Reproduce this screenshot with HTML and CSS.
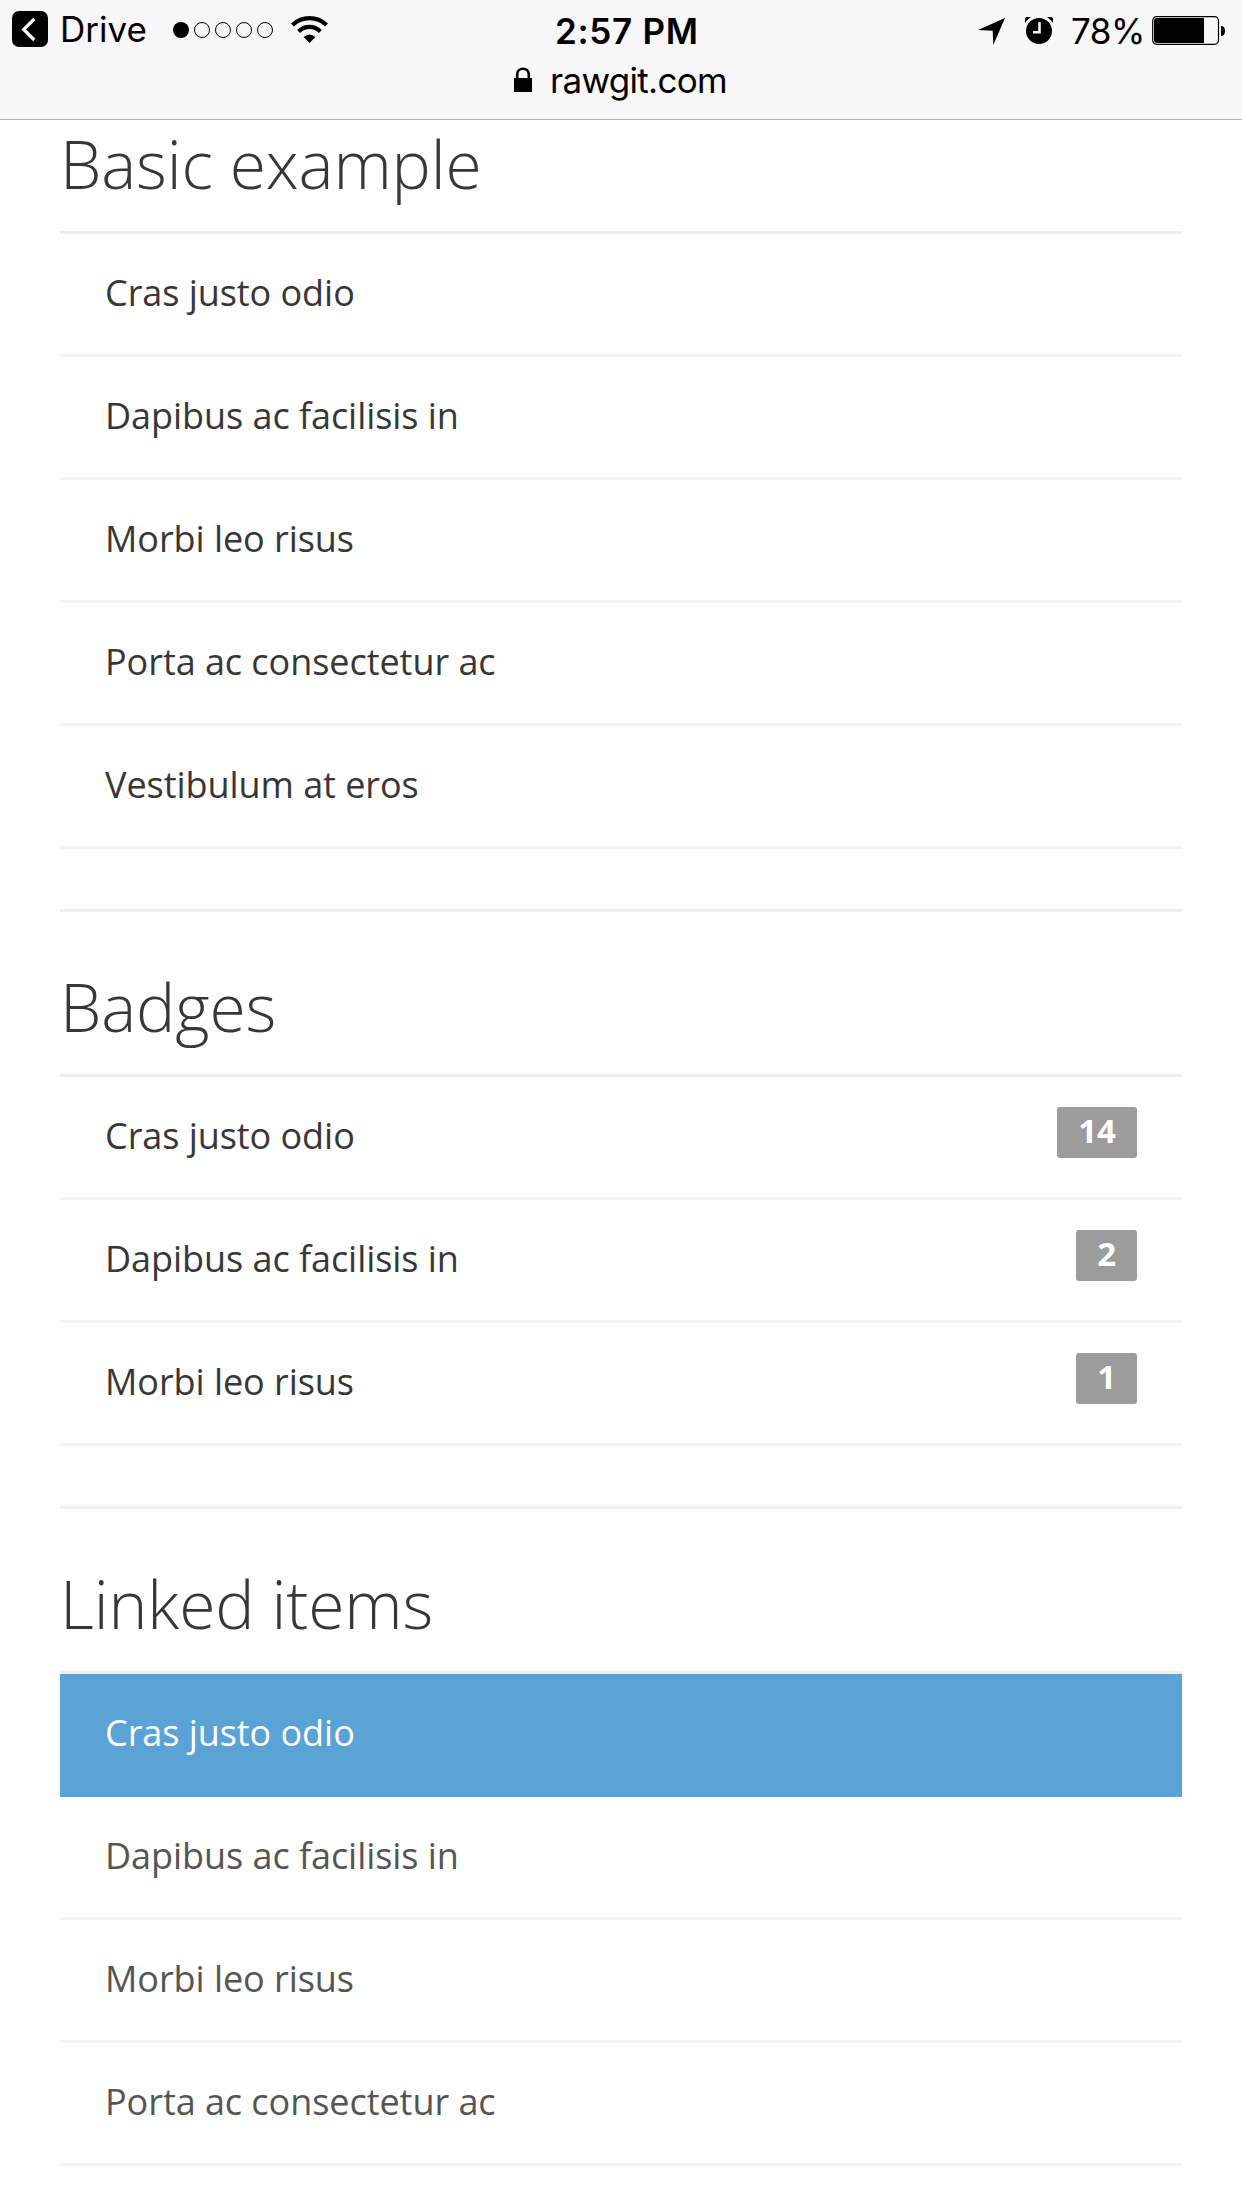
FILE: index.html
```html
<!DOCTYPE html>
<html lang="en">
<head>
<meta charset="utf-8">
<title>List groups</title>
<link rel="stylesheet" href="styles.css">
</head>
<body>
<header class="browser-bar">
  <div class="status">
    <div class="status-left">
      <svg class="back" width="36" height="36" viewBox="0 0 36 36"><rect width="36" height="36" rx="7"/><path d="M22.3 8L11.7 18.5L22.3 29" fill="none" stroke="#f8f7f6" stroke-width="3.2"/></svg>
      <span class="app">Drive</span>
      <svg class="signal" width="101" height="18" viewBox="0 0 101 18"><circle cx="9" cy="9" r="8"/><g fill="none" stroke="#000" stroke-width="1"><circle cx="30" cy="9" r="7.5"/><circle cx="51" cy="9" r="7.5"/><circle cx="72" cy="9" r="7.5"/><circle cx="93" cy="9" r="7.5"/></g></svg>
      <svg class="wifi" width="37" height="28" viewBox="0 0 37 28"><g fill="none" stroke="#000" stroke-width="4.2"><path d="M1.4 9Q8.8 2.1 18.5 2.1T35.6 9"/><path d="M7.6 15.5Q12.2 10.9 18.5 10.9T29.4 15.5"/></g><path d="M12.6 21.1Q18.5 15.9 24.4 21.1L18.5 27Z"/></svg>
    </div>
    <span class="time">2:57 PM</span>
    <div class="status-right">
      <svg class="location" width="28" height="28" viewBox="0 0 28 28"><path d="M0 12L27 0L15.3 27L14.7 12.8Z"/></svg>
      <svg class="alarm" width="28" height="28" viewBox="0 0 28 28"><circle cx="14" cy="14" r="13"/><path d="M0 6V2Q0 0 2 0H6Q3 2 0 6ZM28 6V2Q28 0 26 0H22Q25 2 28 6Z"/><path d="M14.5 5.2V15.3H8" fill="none" stroke="#f8f7f6" stroke-width="2.6"/></svg>
      <span class="percent">78%</span>
      <svg class="battery" width="74" height="30" viewBox="0 0 74 30"><rect x=".7" y=".7" width="65.8" height="27.6" rx="4" fill="none" stroke="#000" stroke-width="1.2"/><path d="M5 2H52V27H5Q2 27 2 24V5Q2 2 5 2ZM69 10Q73 10 73 15T69 20Z"/></svg>
    </div>
  </div>
  <div class="address">
    <svg class="lock" width="18" height="25" viewBox="0 0 18 25"><path d="M0 11H18V25H0Z"/><path d="M3.2 12V7.3C3.2-.2 14.8-.2 14.8 7.3V12" fill="none" stroke="#000" stroke-width="2.6"/></svg>
    <span class="host">rawgit.com</span>
  </div>
</header>
<main class="page">
  <h2 class="title title-first">Basic example</h2>
  <ul class="list">
    <li class="item">Cras justo odio</li>
    <li class="item">Dapibus ac facilisis in</li>
    <li class="item">Morbi leo risus</li>
    <li class="item">Porta ac consectetur ac</li>
    <li class="item">Vestibulum at eros</li>
  </ul>
  <hr class="divider">
  <h2 class="title">Badges</h2>
  <ul class="list">
    <li class="item">Cras justo odio <span class="badge">14</span></li>
    <li class="item">Dapibus ac facilisis in <span class="badge">2</span></li>
    <li class="item">Morbi leo risus <span class="badge">1</span></li>
  </ul>
  <hr class="divider">
  <h2 class="title">Linked items</h2>
  <nav class="list">
    <a class="item link active">Cras justo odio</a>
    <a class="item link">Dapibus ac facilisis in</a>
    <a class="item link">Morbi leo risus</a>
    <a class="item link">Porta ac consectetur ac</a>
  </nav>
</main>
</body>
</html>
```
FILE: styles.css
```css
* { box-sizing: border-box; }
body {
  margin: 0;
  height: 2208px;
  overflow: hidden;
  background: #fefefe;
  color: #373737;
  font-family: "Open Sans", sans-serif;
}
svg { display: block; flex: none; }

.browser-bar {
  height: 120px;
  background: #f7f7f7;
  border-bottom: 1px solid #b2b2b2;
  color: #000;
  font: 35px/44px Inter, "Liberation Sans", sans-serif;
  white-space: nowrap;
}
.status {
  display: grid;
  grid-template-columns: 555px 1fr 264px;
  height: 58px;
}
.status-left, .status-right { display: flex; align-items: flex-start; }
.back { margin: 11px 0 0 12px; }
.app { width: 98px; margin: 7px 0 0 12px; }
.signal { margin: 21px 0 0 14px; }
.wifi { margin: 16px 0 0 18px; }
.time { margin-top: 9px; font-weight: 600; letter-spacing: .7px; }
.location { margin-top: 18px; }
.alarm { margin: 17px 0 0 19px; }
.percent { width: 80px; margin: 9px 0 0 18px; letter-spacing: -.5px; }
.battery { margin: 16px 0 0 1px; }
.address {
  display: flex;
  gap: 18px;
  padding-left: 514px;
}
.lock { margin-top: 9px; }
.host { letter-spacing: -.7px; }

.page { padding: 0 60px; }
.title {
  margin: 58px 0 0;
  padding-bottom: 32px;
  border-bottom: 3px solid #ededed;
  font-size: 66px;
  font-weight: 300;
  letter-spacing: -.13px;
  line-height: 72px;
}
.title-first { margin-top: 7px; }
.list { margin: 0; padding: 0; list-style: none; }
.item {
  display: flex;
  justify-content: space-between;
  align-items: flex-start;
  height: 123px;
  padding: 30px 45px 0;
  border-bottom: 3px solid #f4f4f4;
  font-size: 36px;
  letter-spacing: -.05px;
  line-height: 58px;
}
.link { color: #555; }
.active {
  background: #5ba3d7;
  border-color: #5ba3d7;
  color: #fff;
}
.badge {
  height: 51px;
  padding: 0 21px;
  border-radius: 3px;
  background: #9c9c9c;
  color: #fff;
  font-size: 33px;
  font-weight: 700;
  letter-spacing: 0;
  line-height: 48px;
}
.divider {
  height: 3px;
  margin: 60px 0 0;
  border: 0;
  background: #f0f0f0;
}
```
